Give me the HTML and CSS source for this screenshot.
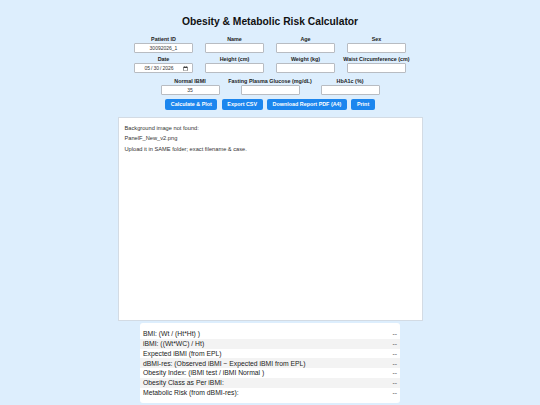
FILE: index.html
```html
<!DOCTYPE html>
<html lang="en">
<head>
<meta charset="utf-8">
<title>Obesity &amp; Metabolic Risk Calculator</title>
<link rel="stylesheet" href="styles.css">
</head>
<body>
<main class="page">
  <h1 class="title">Obesity &amp; Metabolic Risk Calculator</h1>

  <section class="grid grid-4">
    <div class="field"><label class="label">Patient ID</label><input class="input" type="text" value="30092026_1"></div>
    <div class="field"><label class="label">Name</label><input class="input" type="text"></div>
    <div class="field"><label class="label">Age</label><input class="input" type="text"></div>
    <div class="field"><label class="label">Sex</label><input class="input" type="text"></div>
    <div class="field"><label class="label">Date</label><input class="input" type="date" value="2026-05-30"></div>
    <div class="field"><label class="label">Height (cm)</label><input class="input" type="text"></div>
    <div class="field"><label class="label">Weight (kg)</label><input class="input" type="text"></div>
    <div class="field"><label class="label">Waist Circumference (cm)</label><input class="input" type="text"></div>
  </section>

  <section class="grid grid-3">
    <div class="field"><label class="label">Normal IBMI</label><input class="input" type="text" value="35"></div>
    <div class="field"><label class="label">Fasting Plasma Glucose (mg/dL)</label><input class="input" type="text"></div>
    <div class="field"><label class="label">HbA1c (%)</label><input class="input" type="text"></div>
  </section>

  <div class="actions">
    <button class="btn">Calculate &amp; Plot</button>
    <button class="btn">Export CSV</button>
    <button class="btn">Download Report PDF (A4)</button>
    <button class="btn">Print</button>
  </div>

  <div class="canvas">
    <div class="msg">Background image not found:</div>
    <div class="msg">PanelF_New_v2.png</div>
    <div class="msg">Upload it in SAME folder; exact filename &amp; case.</div>
  </div>

  <section class="results">
    <div class="row"><span>BMI: (Wt / (Ht*Ht) )</span><span class="val">--</span></div>
    <div class="row"><span>iBMI: ((Wt*WC) / Ht)</span><span class="val">--</span></div>
    <div class="row"><span>Expected iBMI (from EPL)</span><span class="val">--</span></div>
    <div class="row"><span>dBMI-res: (Observed iBMI − Expected iBMI from EPL)</span><span class="val">--</span></div>
    <div class="row"><span>Obesity Index: (iBMI test / iBMI Normal )</span><span class="val">--</span></div>
    <div class="row"><span>Obesity Class as Per iBMI:</span><span class="val">--</span></div>
    <div class="row"><span>Metabolic Risk (from dBMI-res):</span><span class="val">--</span></div>
  </section>
</main>
</body>
</html>
```

FILE: styles.css
```css
html, body {
  margin: 0;
  padding: 0;
  background: #ddeefd;
}

body {
  font-family: "Liberation Sans", Arial, sans-serif;
  color: #222;
  overflow: hidden;
}

.page {
  display: flex;
  flex-direction: column;
  align-items: center;
  padding-bottom: 20px;
}

.title {
  margin: 15px 0 0;
  font-size: 10.3px;
  line-height: 13px;
  font-weight: bold;
  color: #111;
}

.grid {
  display: grid;
  justify-content: center;
  row-gap: 3.5px;
}

.grid-4 {
  margin-top: 7.5px;
  grid-template-columns: repeat(4, 59px);
  column-gap: 12px;
}

.grid-3 {
  margin-top: 5px;
  grid-template-columns: repeat(3, 59px);
  column-gap: 21px;
}

.field {
  display: flex;
  flex-direction: column;
  align-items: center;
}

.label {
  font-size: 5.4px;
  line-height: 6px;
  font-weight: bold;
  color: #222;
  white-space: nowrap;
  margin-bottom: 1px;
}

.input {
  box-sizing: border-box;
  width: 59px;
  height: 10px;
  margin: 0;
  padding: 0 2px;
  border: 0.6px solid #b8bcc2;
  border-radius: 1px;
  background: #fff;
  font-family: "Liberation Sans", Arial, sans-serif;
  font-size: 5px;
  color: #333;
  text-align: center;
  outline: none;
}

.actions {
  display: flex;
  gap: 4.5px;
  margin-top: 3.5px;
}

.btn {
  height: 11px;
  padding: 0 5.5px;
  border: 0;
  border-radius: 2px;
  background: #1c86ee;
  color: #fff;
  font-family: "Liberation Sans", Arial, sans-serif;
  font-size: 5.4px;
  font-weight: bold;
  line-height: 11px;
  white-space: nowrap;
}

.canvas {
  box-sizing: border-box;
  width: 305px;
  height: 204px;
  margin-top: 7px;
  padding: 5px 6px 0;
  background: #fff;
  border: 1px solid #d3dbe4;
}

.msg {
  font-size: 5.7px;
  line-height: 10.7px;
  color: #333;
}

.results {
  box-sizing: border-box;
  width: 260px;
  margin-top: 2px;
  padding: 6.5px 0 6px;
  background: #fff;
  border-radius: 3px;
}

.row {
  display: flex;
  justify-content: space-between;
  align-items: center;
  height: 9.75px;
  padding: 0 3px;
  font-size: 6.8px;
  color: #222;
}

.row:nth-child(even) {
  background: #f3f3f3;
}

.val {
  color: #555;
}
```
